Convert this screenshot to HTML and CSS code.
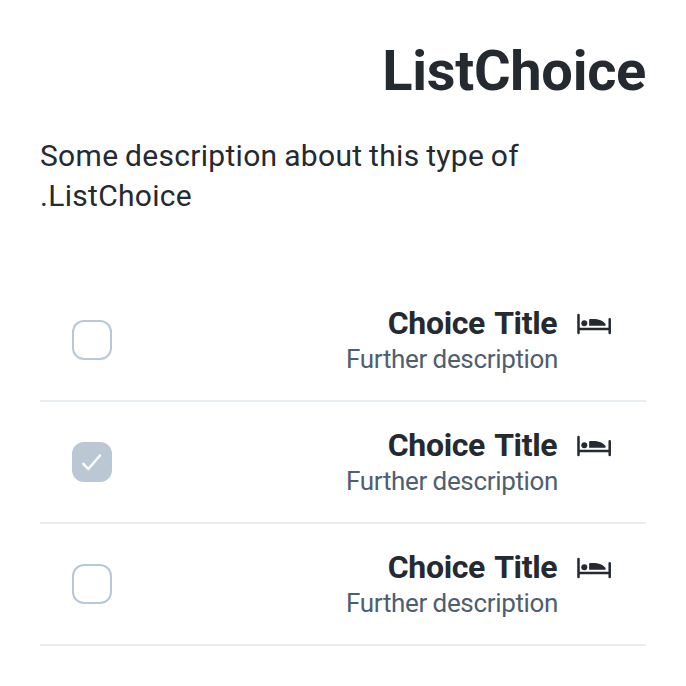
FILE: index.html
```html
<!DOCTYPE html>
<html lang="he" dir="rtl">
<head>
<meta charset="utf-8">
<title>ListChoice</title>
<link rel="stylesheet" href="styles.css">
</head>
<body>
<svg class="defs" viewBox="0 0 40 40"><defs><g id="bed">
<path d="M4.5 11V29M35.7 15.3V29M4.5 24.9H35.7" fill="none" stroke="currentColor" stroke-width="2.5" stroke-linecap="round"/>
<circle cx="10.3" cy="19.2" r="3"/>
<path d="M15.1 21.8V16.2Q15.1 15.1 16.2 15.1H19C24.5 15.1 29.5 17 31.5 20.1Q32.3 21.8 31 21.8Z"/>
</g></defs></svg>
<main class="page">
<h1 class="title">ListChoice</h1>
<p class="intro">Some description about this type of ListChoice.</p>
<ul class="choices">
<li class="choice"><svg class="icon" viewBox="0 0 40 40"><use href="#bed"/></svg><div class="text"><div class="name">Choice Title</div><div class="desc">Further description</div></div><span class="box"></span></li>
<li class="choice"><svg class="icon" viewBox="0 0 40 40"><use href="#bed"/></svg><div class="text"><div class="name">Choice Title</div><div class="desc">Further description</div></div><span class="box checked"><svg class="check" viewBox="0 0 40 40"><path d="M11.3 21.8L16.3 27L28 13.5"/></svg></span></li>
<li class="choice"><svg class="icon" viewBox="0 0 40 40"><use href="#bed"/></svg><div class="text"><div class="name">Choice Title</div><div class="desc">Further description</div></div><span class="box"></span></li>
</ul>
</main>
</body>
</html>
```
FILE: styles.css
```css
* { box-sizing: border-box; }
body { margin: 0; background: #fff; color: #252a31; font-family: Roboto, sans-serif; }
.defs { display: none; }
.page { padding: 40px; }
.title { margin: -1px 0 0; font-size: 56px; line-height: 64px; font-weight: 700; letter-spacing: -0.3px; }
.intro { margin: 33px 0 0; font-size: 30px; line-height: 40px; text-align: left; letter-spacing: 0.3px; word-spacing: -1px; }
.choices { list-style: none; margin: 64px 0 0; padding: 0; }
.choice { display: flex; height: 122px; padding: 24px 32px; border-bottom: 2px solid #e8edf1; }
.icon { width: 40px; height: 40px; flex: none; fill: currentColor; }
.text { flex: 1; margin: -1px 16px 0 0; }
.name { padding-right: 0.7px; font-size: 32px; line-height: 40px; font-weight: 700; letter-spacing: -0.34px; word-spacing: 2.3px; }
.desc { font-size: 26px; line-height: 32px; color: #4f5e71; letter-spacing: -0.35px; word-spacing: -0.4px; }
.box { width: 40px; height: 40px; align-self: center; border: 2px solid #bac7d5; border-radius: 12px; }
.checked { background: #bac7d5; border: 0; }
.check { display: block; fill: none; stroke: #fff; stroke-width: 2.4; stroke-linecap: round; }
```
